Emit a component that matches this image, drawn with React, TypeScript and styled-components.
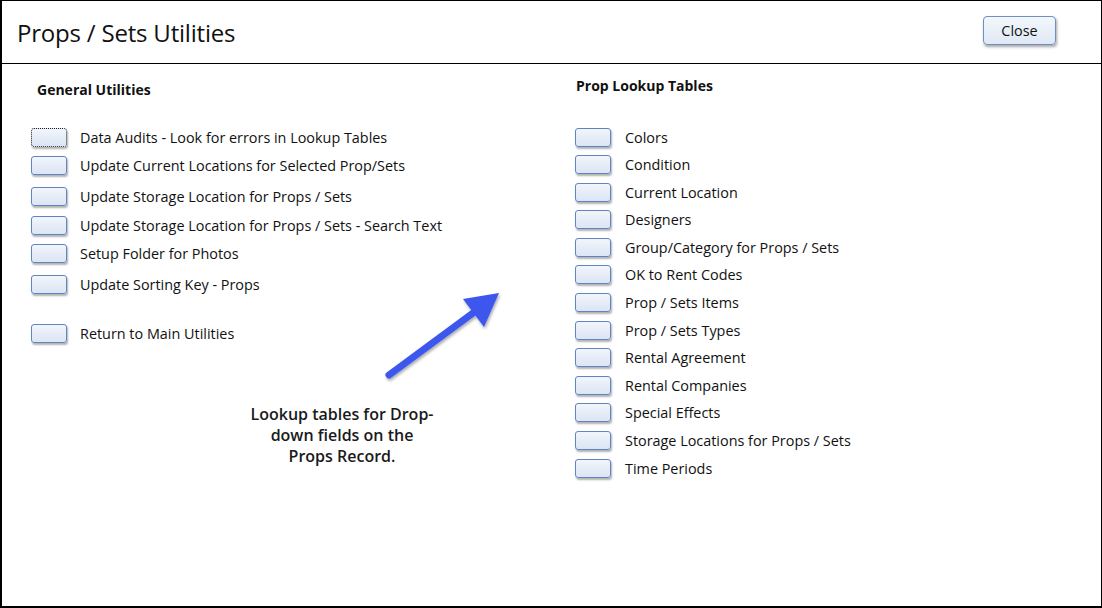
import styled, { createGlobalStyle } from "styled-components";

const Global = createGlobalStyle`
  html, body {
    margin: 0;
    padding: 0;
    background: #fff;
  }
  body {
    font-family: "Open Sans", "Noto Sans", sans-serif;
    color: #111;
  }
`;

const Frame = styled.div`
  position: relative;
  box-sizing: border-box;
  width: 1102px;
  height: 608px;
  border: 1px solid #000;
  border-left-width: 2px;
  border-bottom-width: 2px;
  background: #fff;
  overflow: hidden;
`;

const Header = styled.div`
  display: flex;
  align-items: center;
  justify-content: space-between;
  height: 62px;
  padding: 0 45px 0 15px;
  border-bottom: 1px solid #000;
`;

const Title = styled.h1`
  margin: 0;
  font-size: 24px;
  font-weight: 400;
  letter-spacing: -0.2px;
`;

const CloseBtn = styled.button`
  width: 73px;
  height: 29px;
  margin-top: -4px;
  border: 1px solid #6f8fbf;
  border-radius: 4px;
  background: linear-gradient(180deg, #f3f7fc 0%, #dfe8f5 100%);
  box-shadow: 1px 2px 3px rgba(0, 0, 0, 0.35);
  font-family: inherit;
  font-size: 14.4px;
  color: #111;
`;

const Body = styled.div`
  display: grid;
  grid-template-columns: 544px 1fr;
  padding: 16px 0 0 29px;
`;

const Column = styled.div`
  display: flex;
  flex-direction: column;
`;

const Heading = styled.h2<{ $top: number; $left: number }>`
  margin: ${(p) => p.$top}px 0 0 ${(p) => p.$left}px;
  font-size: 14px;
  font-weight: 700;
  height: 20px;
  line-height: 20px;
`;

const Row = styled.div<{ $space: number; $gap: number }>`
  display: flex;
  align-items: center;
  gap: ${(p) => p.$gap}px;
  height: 22px;
  margin-top: ${(p) => p.$space}px;
  font-size: 14.4px;
`;

const Key = styled.span<{ $focus?: boolean }>`
  box-sizing: border-box;
  width: 36px;
  height: 19px;
  flex: none;
  border: 1px ${(p) => (p.$focus ? "dotted #222" : "solid #5f86c2")};
  border-radius: 3px;
  background: linear-gradient(180deg, #f2f5fb 0%, #dbe5f4 100%);
  box-shadow: 1px 2px 2px rgba(0, 0, 0, 0.3);
`;

const Note = styled.p`
  margin: 60px 0 0 206px;
  width: 210px;
  text-align: center;
  font-size: 16px;
  font-weight: 600;
  line-height: 21px;
  color: #1a1a1a;
`;

const Arrow = styled.svg`
  position: absolute;
  left: 376px;
  top: 284px;
  width: 130px;
  height: 100px;
  overflow: visible;
`;

const general = [
  { label: "Data Audits - Look for errors in Lookup Tables", space: 26, focus: true },
  { label: "Update Current Locations for Selected Prop/Sets", space: 6 },
  { label: "Update Storage Location for Props / Sets", space: 9 },
  { label: "Update Storage Location for Props / Sets - Search Text", space: 7 },
  { label: "Setup Folder for Photos", space: 6 },
  { label: "Update Sorting Key - Props", space: 9 },
  { label: "Return to Main Utilities", space: 27 },
];

const lookups = [
  "Colors",
  "Condition",
  "Current Location",
  "Designers",
  "Group/Category for Props / Sets",
  "OK to Rent Codes",
  "Prop / Sets Items",
  "Prop / Sets Types",
  "Rental Agreement",
  "Rental Companies",
  "Special Effects",
  "Storage Locations for Props / Sets",
  "Time Periods",
];

function App() {
  return (
    <Frame>
      <Global />
      <Header>
        <Title>Props / Sets Utilities</Title>
        <CloseBtn>Close</CloseBtn>
      </Header>
      <Body>
        <Column>
          <Heading $top={0} $left={6}>
            General Utilities
          </Heading>
          {general.map((g) => (
            <Row key={g.label} $space={g.space} $gap={13}>
              <Key $focus={g.focus} />
              {g.label}
            </Row>
          ))}
          <Note>
            Lookup tables for Drop-
            <br />
            down fields on the
            <br />
            Props Record.
          </Note>
        </Column>
        <Column>
          <Heading $top={-4} $left={1}>
            Prop Lookup Tables
          </Heading>
          {lookups.map((l, i) => (
            <Row key={l} $space={i === 0 ? 30 : 5.6} $gap={14}>
              <Key />
              {l}
            </Row>
          ))}
        </Column>
      </Body>
      <Arrow viewBox="0 0 130 100">
        <defs>
          <filter id="sh" x="-20%" y="-20%" width="140%" height="140%">
            <feDropShadow dx="1" dy="2" stdDeviation="1.5" floodColor="#000" floodOpacity="0.35" />
          </filter>
        </defs>
        <g filter="url(#sh)">
          <line x1="11" y1="90" x2="95" y2="28" stroke="#3d57ee" strokeWidth="7" strokeLinecap="round" />
          <polygon points="121,8 85,14 106,42" fill="#3d57ee" />
        </g>
      </Arrow>
    </Frame>
  );
}

export default App;
